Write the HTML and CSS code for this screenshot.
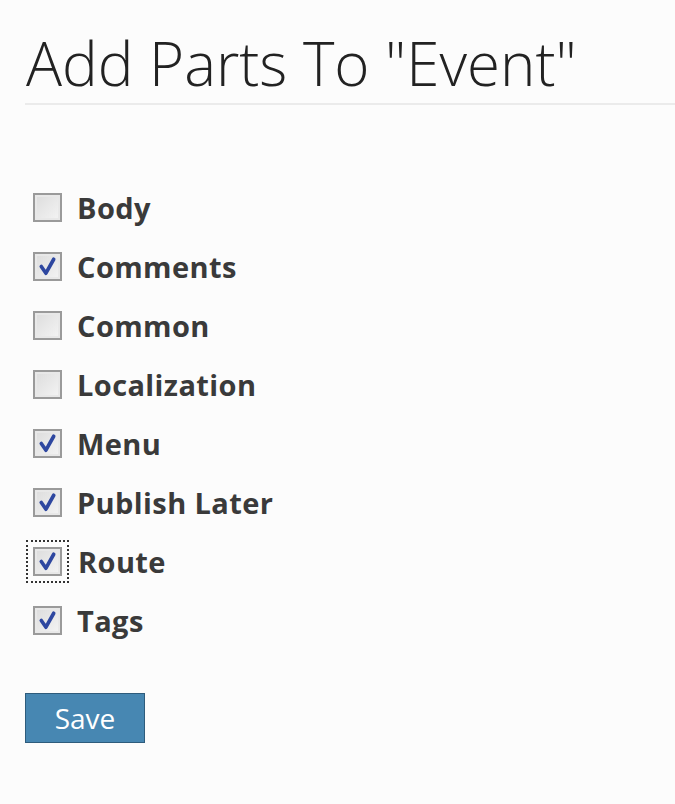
FILE: index.html
```html
<!DOCTYPE html>
<html>
<head>
<meta charset="utf-8">
<link rel="stylesheet" href="styles.css">
</head>
<body>
<div class="page">
  <h1 class="title">Add Parts To "Event"</h1>
  <ul class="parts">
    <li class="part"><span class="box"></span><span class="label">Body</span></li>
    <li class="part"><span class="box checked"><svg viewBox="0 0 28 28"><path d="M8 14 L12.5 20.5 L20 7"/></svg></span><span class="label">Comments</span></li>
    <li class="part"><span class="box"></span><span class="label">Common</span></li>
    <li class="part"><span class="box"></span><span class="label">Localization</span></li>
    <li class="part"><span class="box checked"><svg viewBox="0 0 28 28"><path d="M8 14 L12.5 20.5 L20 7"/></svg></span><span class="label">Menu</span></li>
    <li class="part"><span class="box checked"><svg viewBox="0 0 28 28"><path d="M8 14 L12.5 20.5 L20 7"/></svg></span><span class="label">Publish Later</span></li>
    <li class="part"><span class="box checked focused"><svg viewBox="0 0 28 28"><path d="M8 14 L12.5 20.5 L20 7"/></svg></span><span class="label route">Route</span></li>
    <li class="part"><span class="box checked"><svg viewBox="0 0 28 28"><path d="M8 14 L12.5 20.5 L20 7"/></svg></span><span class="label">Tags</span></li>
  </ul>
  <button class="save">Save</button>
</div>
</body>
</html>
```
FILE: styles.css
```css
html, body {
  margin: 0;
  padding: 0;
  background: #fcfcfc;
}
.page {
  padding: 33px 0 0 25px;
  font-family: "Open Sans", "Noto Sans", sans-serif;
  color: #333;
}
.title {
  margin: 0;
  font-weight: 300;
  font-size: 60px;
  line-height: 60px;
  padding: 0 0 10px 1px;
  border-bottom: 2px solid #ebebeb;
  color: #222;
}
.parts {
  list-style: none;
  margin: 73px 0 0 0;
  padding: 0;
}
.part {
  display: flex;
  align-items: center;
  height: 59px;
}
.box {
  position: relative;
  box-sizing: border-box;
  width: 29px;
  height: 29px;
  margin-left: 8px;
  border: 2px solid #9a9a9a;
  background: linear-gradient(135deg, #dcdcdc, #f4f4f4);
  box-shadow: inset 0 0 0 2px #e8e8e8;
  flex-shrink: 0;
}
.box svg {
  position: absolute;
  left: -2px;
  top: -2px;
  width: 29px;
  height: 29px;
}
.box path {
  fill: none;
  stroke: #2e47a0;
  stroke-width: 3.5px;
  stroke-linecap: round;
  stroke-linejoin: round;
}
.box.focused {
  outline: 2px dotted #333;
  outline-offset: 5px;
}
.label {
  margin-left: 15px;
  font-weight: 700;
  font-size: 29px;
  letter-spacing: 0.4px;
  color: #3a3a3a;
}
.label.route {
  margin-left: 16px;
}
.save {
  margin-top: 43px;
  width: 120px;
  height: 50px;
  background: #4787b2;
  border: 1px solid #2e5c7c;
  color: #fff;
  font-family: "Open Sans", "Noto Sans", sans-serif;
  font-size: 28px;
  padding: 0;
}
```
